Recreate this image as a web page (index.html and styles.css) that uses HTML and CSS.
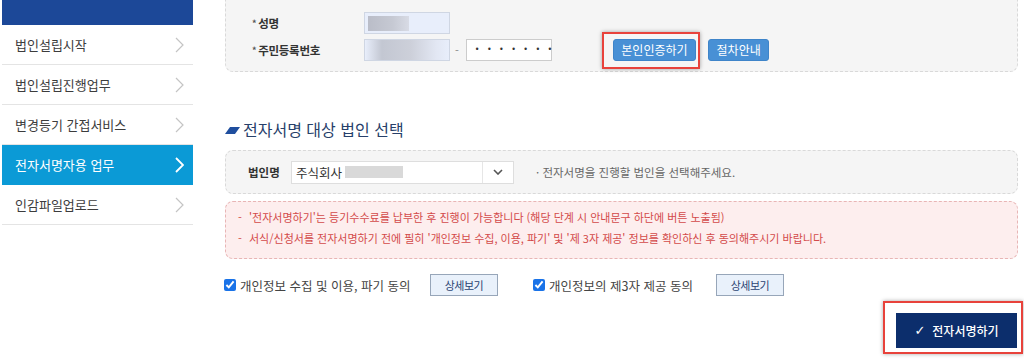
FILE: index.html
```html
<!DOCTYPE html>
<html lang="ko">
<head>
<meta charset="utf-8">
<title>전자서명자용 업무</title>
<link rel="stylesheet" href="styles.css">
</head>
<body>
<div class="page">
  <aside class="sidebar">
    <div class="side-head"></div>
    <ul class="side-menu">
      <li class="side-item"><span>법인설립시작</span><svg class="chev" viewBox="0 0 9 16"><polyline points="1,1 8,8 1,15"/></svg></li>
      <li class="side-item"><span>법인설립진행업무</span><svg class="chev" viewBox="0 0 9 16"><polyline points="1,1 8,8 1,15"/></svg></li>
      <li class="side-item"><span>변경등기 간접서비스</span><svg class="chev" viewBox="0 0 9 16"><polyline points="1,1 8,8 1,15"/></svg></li>
      <li class="side-item is-active"><span>전자서명자용 업무</span><svg class="chev" viewBox="0 0 9 16"><polyline points="1,1 8,8 1,15"/></svg></li>
      <li class="side-item"><span>인감파일업로드</span><svg class="chev" viewBox="0 0 9 16"><polyline points="1,1 8,8 1,15"/></svg></li>
    </ul>
  </aside>

  <main class="content">
    <section class="auth-box">
      <div class="form-row">
        <span class="form-label"><span class="star">*</span>성명</span>
        <span class="field field-name"><span class="blur-name"></span></span>
      </div>
      <div class="form-row">
        <span class="form-label"><span class="star">*</span>주민등록번호</span>
        <span class="field field-id"></span>
        <span class="dash">-</span>
        <span class="field field-pw">•••••••</span>
        <span class="highlight highlight-auth"><button class="btn-blue">본인인증하기</button></span>
        <button class="btn-blue btn-guide">절차안내</button>
      </div>
    </section>

    <h2 class="section-title"><svg class="title-icon" viewBox="0 0 15 7"><polygon points="5,0 15,0 10,7 0,7"/></svg>전자서명 대상 법인 선택</h2>

    <section class="corp-box">
      <span class="corp-label">법인명</span>
      <div class="select">
        <span class="select-value">주식회사<span class="blur-corp"></span></span>
        <span class="select-arrow"><svg viewBox="0 0 10 6"><polyline points="1,1 5,5 9,1"/></svg></span>
      </div>
      <span class="corp-note">· 전자서명을 진행할 법인을 선택해주세요.</span>
    </section>

    <section class="notice-box">
      <p class="notice-line"><span class="notice-dash">-</span>'전자서명하기'는 등기수수료를 납부한 후 진행이 가능합니다 (해당 단계 시 안내문구 하단에 버튼 노출됨)</p>
      <p class="notice-line"><span class="notice-dash">-</span>서식/신청서를 전자서명하기 전에 필히 '개인정보 수집, 이용, 파기' 및 '제 3자 제공' 정보를 확인하신 후 동의해주시기 바랍니다.</p>
    </section>

    <div class="agree-row">
      <label class="agree-item"><input type="checkbox" checked><span class="agree-text agree-text-1">개인정보 수집 및 이용, 파기 동의</span></label>
      <button class="btn-detail">상세보기</button>
      <label class="agree-item agree-item-2"><input type="checkbox" checked><span class="agree-text agree-text-2">개인정보의 제3자 제공 동의</span></label>
      <button class="btn-detail">상세보기</button>
    </div>

    <div class="submit-row">
      <span class="highlight highlight-submit"><button class="btn-submit"><span class="check">✓</span>전자서명하기</button></span>
    </div>
  </main>
</div>
</body>
</html>
```

FILE: styles.css
```css
* { box-sizing: border-box; }

html, body {
  margin: 0;
  padding: 0;
  background: #ffffff;
  overflow: hidden;
}

body {
  font-family: "Noto Sans CJK KR", "Noto Sans", sans-serif;
  color: #333333;
  font-size: 12px;
}

.page {
  display: flex;
  width: 1024px;
  height: 359px;
}

/* Sidebar */
.sidebar {
  margin-left: 2px;
  width: 191px;
  flex: none;
}

.side-head {
  height: 25px;
  background: #1c4898;
}

.side-menu {
  list-style: none;
  margin: 0;
  padding: 0;
}

.side-item {
  display: flex;
  align-items: center;
  justify-content: space-between;
  height: 40px;
  padding: 0 9px 0 13px;
  border-bottom: 1px solid #e4e4e4;
  font-size: 13px;
  color: #3c3c3c;
}

.side-item.is-active {
  background: #0b9ad6;
  border-bottom-color: #0b9ad6;
  color: #ffffff;
}

.chev {
  width: 9px;
  height: 16px;
  fill: none;
  stroke: #c4c4c4;
  stroke-width: 1.2;
}

.is-active .chev {
  stroke: #ffffff;
  stroke-width: 1.8;
}

/* Main content */
.content {
  margin-left: 32px;
  width: 793px;
  margin-top: -10px;
  flex: none;
}

.auth-box {
  background: #f5f5f5;
  border: 1px dashed #d9d9d9;
  border-radius: 8px;
  padding: 21px 0 10px 26px;
  display: flex;
  flex-direction: column;
  gap: 5px;
}

.form-row {
  display: flex;
  align-items: center;
  height: 22px;
}

.form-label {
  width: 112px;
  font-size: 11.5px;
  font-weight: 700;
  color: #333333;
  letter-spacing: -0.3px;
}

.star {
  font-size: 9px;
  color: #555555;
  margin-right: 2px;
  vertical-align: 1px;
}

.field {
  display: block;
  width: 86px;
  height: 22px;
  border: 1px solid #cfd6e3;
  background: #e8eefb;
}

.field-name {
  padding: 3px 0 0 3px;
}

.blur-name {
  display: block;
  width: 41px;
  height: 15px;
  background: linear-gradient(90deg, #babdc8 0%, #c6c9d3 60%, #d8dbe5 100%);
}

.field-id {
  background: linear-gradient(90deg, #e8eefb 0%, #c3c7d2 20%, #cdd0da 55%, #e2e7f3 85%, #e8eefb 100%);
}

.dash {
  margin: 0 7px 0 5px;
  color: #888888;
  font-size: 11px;
}

.field-pw {
  background: #ffffff;
  border-color: #cccccc;
  font-size: 8px;
  line-height: 20px;
  letter-spacing: 7.4px;
  padding-left: 8px;
  color: #333333;
  font-family: "DejaVu Sans", sans-serif;
}

.btn-blue {
  height: 22px;
  padding: 0 7.5px;
  border: 1px solid #3e84c9;
  border-radius: 3px;
  background: #4890d5;
  color: #ffffff;
  font-family: inherit;
  font-size: 12px;
  line-height: 20px;
  cursor: pointer;
}

.btn-guide {
  margin-left: 12px;
}

.highlight {
  position: relative;
  display: inline-flex;
}

.highlight::after {
  content: "";
  position: absolute;
  border: 2px solid #e8423b;
  box-shadow: 0 0 4px rgba(0, 0, 0, 0.35);
  pointer-events: none;
}

.highlight-auth {
  margin-left: 61px;
}

.highlight-auth::after {
  left: -11px;
  right: -4px;
  top: -7px;
  bottom: -8px;
}

/* Section title */
.section-title {
  display: flex;
  align-items: center;
  margin: 47px 0 11px;
  height: 20px;
  font-size: 16px;
  font-weight: 400;
  color: #27406a;
}

.title-icon {
  width: 15px;
  height: 7px;
  fill: #1f4e9e;
  margin-right: 3px;
  margin-top: 3px;
}

/* Corporation box */
.corp-box {
  display: flex;
  align-items: center;
  height: 44px;
  background: #f5f5f5;
  border: 1px dashed #d9d9d9;
  border-radius: 8px;
  padding-left: 22px;
}

.corp-label {
  width: 43px;
  font-size: 11.5px;
  font-weight: 700;
  color: #333333;
}

.select {
  display: flex;
  width: 223px;
  height: 23px;
  background: #ffffff;
  border: 1px solid #dedede;
}

.select-value {
  flex: 1;
  display: flex;
  align-items: center;
  padding-left: 4px;
  font-size: 12.5px;
  color: #333333;
}

.blur-corp {
  display: block;
  width: 58px;
  height: 12px;
  margin-left: 3px;
  background: #d9d9d9;
}

.select-arrow {
  width: 31px;
  display: flex;
  align-items: center;
  justify-content: center;
  border-left: 1px solid #e6e6e6;
}

.select-arrow svg {
  width: 10px;
  height: 6px;
  fill: none;
  stroke: #555555;
  stroke-width: 1.6;
}

.corp-note {
  margin-left: 22px;
  font-size: 11.5px;
  color: #666666;
}

/* Notice box */
.notice-box {
  margin-top: 7px;
  background: #fdeeee;
  border: 1px dashed #e8b5b5;
  border-radius: 8px;
  padding: 5px 0 9px 12px;
}

.notice-line {
  margin: 0;
  font-size: 11px;
  line-height: 21px;
  color: #d34a4a;
  letter-spacing: 0;
  white-space: nowrap;
}

.notice-dash {
  display: inline-block;
  width: 11px;
}

/* Agreement row */
.agree-row {
  display: flex;
  align-items: center;
  margin-top: 15px;
  height: 22px;
}

.agree-item {
  display: flex;
  align-items: center;
  font-size: 12.5px;
  color: #444444;
}

.agree-item input {
  width: 12px;
  height: 12px;
  margin: 0 4px 0 -1px;
  accent-color: #1a73e8;
}

.agree-text-1 {
  width: 190px;
}

.agree-item-2 {
  margin-left: 36px;
}

.agree-text-2 {
  width: 167px;
}

.btn-detail {
  width: 68px;
  height: 22px;
  padding: 0;
  background: #e9f1fb;
  border: 1px solid #97a6b9;
  color: #2a4372;
  font-family: inherit;
  font-size: 11px;
  letter-spacing: -0.5px;
  cursor: pointer;
}

/* Submit */
.submit-row {
  display: flex;
  justify-content: flex-end;
  margin-top: 17px;
  padding-right: 1px;
}

.highlight-submit::after {
  left: -13px;
  right: -6px;
  top: -12px;
  bottom: -6px;
}

.btn-submit {
  width: 121px;
  height: 35px;
  border: none;
  background: #0c2e6c;
  color: #ffffff;
  font-family: inherit;
  font-size: 12px;
  font-weight: 500;
  display: flex;
  align-items: center;
  justify-content: center;
  cursor: pointer;
}

.check {
  margin-right: 7px;
  font-family: "DejaVu Sans", sans-serif;
  font-size: 13px;
  font-weight: 700;
}
```
